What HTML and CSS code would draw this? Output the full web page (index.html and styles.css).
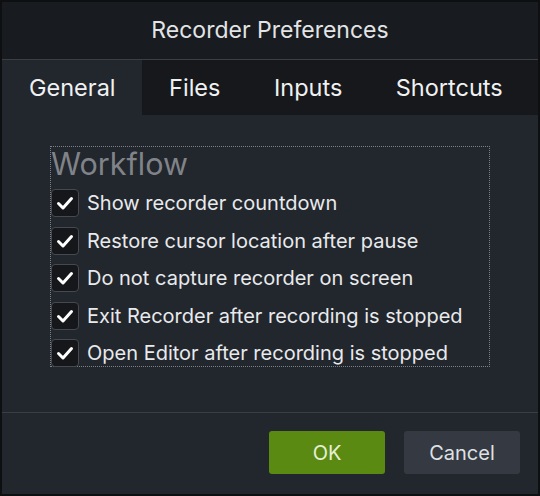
FILE: index.html
```html
<!DOCTYPE html>
<html>
<head>
<meta charset="utf-8">
<link rel="stylesheet" href="styles.css">
</head>
<body>
<div class="window">
  <div class="titlebar">Recorder Preferences</div>
  <div class="tabs">
    <div class="tab active">General</div>
    <div class="tab">Files</div>
    <div class="tab">Inputs</div>
    <div class="tab">Shortcuts</div>
  </div>
  <div class="content">
    <div class="group">
      <div class="heading">Workflow</div>
      <div class="rows">
        <label class="row"><span class="check"><svg viewBox="0 0 28 28" width="28" height="28"><path d="M7.5 14.5 L12 19 L20.5 9.5" fill="none" stroke="#fff" stroke-width="3" stroke-linecap="round" stroke-linejoin="round"/></svg></span><span class="label">Show recorder countdown</span></label>
        <label class="row"><span class="check"><svg viewBox="0 0 28 28" width="28" height="28"><path d="M7.5 14.5 L12 19 L20.5 9.5" fill="none" stroke="#fff" stroke-width="3" stroke-linecap="round" stroke-linejoin="round"/></svg></span><span class="label">Restore cursor location after pause</span></label>
        <label class="row"><span class="check"><svg viewBox="0 0 28 28" width="28" height="28"><path d="M7.5 14.5 L12 19 L20.5 9.5" fill="none" stroke="#fff" stroke-width="3" stroke-linecap="round" stroke-linejoin="round"/></svg></span><span class="label">Do not capture recorder on screen</span></label>
        <label class="row"><span class="check"><svg viewBox="0 0 28 28" width="28" height="28"><path d="M7.5 14.5 L12 19 L20.5 9.5" fill="none" stroke="#fff" stroke-width="3" stroke-linecap="round" stroke-linejoin="round"/></svg></span><span class="label">Exit Recorder after recording is stopped</span></label>
        <label class="row"><span class="check"><svg viewBox="0 0 28 28" width="28" height="28"><path d="M7.5 14.5 L12 19 L20.5 9.5" fill="none" stroke="#fff" stroke-width="3" stroke-linecap="round" stroke-linejoin="round"/></svg></span><span class="label">Open Editor after recording is stopped</span></label>
      </div>
    </div>
  </div>
  <div class="footer">
    <button class="btn ok">OK</button>
    <button class="btn cancel">Cancel</button>
  </div>
</div>
</body>
</html>
```
FILE: styles.css
```css
* { box-sizing: border-box; }
html, body { margin: 0; padding: 0; background: #0e0f11; }
body { font-family: "Inter", "Open Sans", sans-serif; }
.window {
  width: 540px;
  height: 496px;
  border: 2px solid #0e0f11;
  background: #22262d;
  display: flex;
  flex-direction: column;
}
.titlebar {
  height: 58px;
  flex: none;
  background: #181b1f;
  border-bottom: 1px solid #3b3f44;
  color: #e2e4e6;
  font-size: 23px;
  display: flex;
  align-items: center;
  justify-content: center;
  padding-bottom: 2px;
}
.tabs {
  height: 55px;
  flex: none;
  display: flex;
  background: #16181b;
}
.tab {
  padding: 0 26.5px 0 27px;
  display: flex;
  align-items: center;
  color: #f0f1f2;
  font-size: 23.5px;
}
.tab.active { background: #22262d; }
.content {
  height: 298px;
  flex: none;
  padding: 31px 0 0 48px;
  border-bottom: 1px solid #3a3e44;
}
.group {
  width: 440px;
  height: 221px;
  border: 1px dotted #7d8084;
}
.heading {
  height: 42px;
  color: #808388;
  font-size: 30.5px;
  line-height: 34px;
}
.rows {
  display: flex;
  flex-direction: column;
  gap: 9.5px;
}
.row {
  display: flex;
  align-items: center;
  height: 28px;
  gap: 8px;
}
.check {
  width: 28px;
  height: 28px;
  flex: none;
  border: 1px solid #464a50;
  border-radius: 4px;
  background: #15171a;
  display: flex;
  align-items: center;
  justify-content: center;
}
.check svg { display: block; margin: -1px; }
.label {
  color: #e8eaec;
  font-size: 20px;
}
.footer {
  flex: 1;
  display: flex;
  justify-content: flex-end;
  align-items: flex-start;
  padding: 18px 18px 0 0;
  gap: 19px;
}
.btn {
  width: 116px;
  height: 43px;
  border: none;
  border-radius: 3px;
  font-family: inherit;
  font-size: 20px;
  cursor: pointer;
}
.btn.ok { background: #5b8a12; color: #e6f0d6; }
.btn.cancel { background: #353942; color: #dfe1e4; }
```
